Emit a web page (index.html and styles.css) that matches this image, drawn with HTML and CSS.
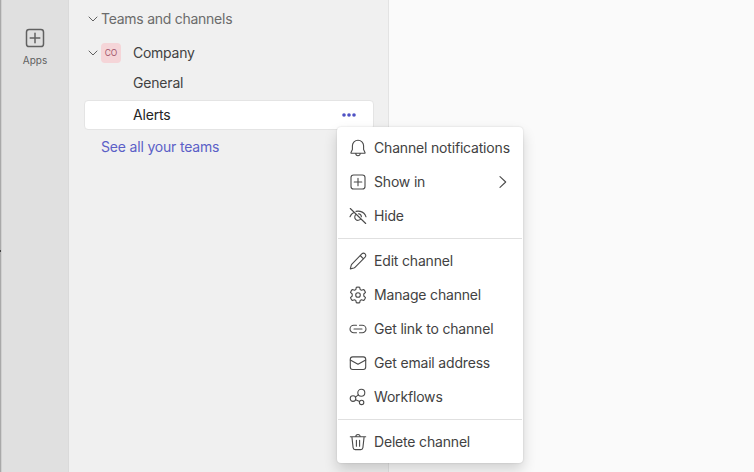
FILE: index.html
```html
<!DOCTYPE html>
<html lang="en">
<head>
<meta charset="utf-8">
<title>Teams and channels</title>
<link rel="stylesheet" href="styles.css">
</head>
<body>
<div class="app">
  <nav class="rail">
    <span class="edge-mark"></span>
    <button class="rail-item">
      <svg width="20" height="20" viewBox="0 0 20 20"><rect x="1.5" y="1.5" width="17" height="17" rx="2.6"/><path d="M10 5.200v9.600M5.200 10h9.600"/></svg>
      <span>Apps</span>
    </button>
  </nav>
  <aside class="sidebar">
    <div class="row heading">
      <svg class="caret" width="10" height="6" viewBox="0 0 10 6"><path d="M1 1l4 4 4-4"/></svg>
      <span>Teams and channels</span>
    </div>
    <div class="row team">
      <svg class="caret" width="10" height="6" viewBox="0 0 10 6"><path d="M1 1l4 4 4-4"/></svg>
      <span class="avatar">CO</span>
      <span>Company</span>
    </div>
    <div class="row channel">General</div>
    <div class="row channel selected">
      <span>Alerts</span>
      <svg class="more" width="14" height="4" viewBox="0 0 14 4"><circle cx="2" cy="2" r="1.8"/><circle cx="7" cy="2" r="1.8"/><circle cx="12" cy="2" r="1.8"/></svg>
      <div class="menu">
        <div class="item"><svg viewBox="0 0 18 18"><path d="M9 1.2a5.6 5.6 0 0 0-5.6 5.6v3.7L2 13.4q-.3.9.6.9h12.8q.9 0 .6-.9l-1.4-2.9V6.8A5.6 5.6 0 0 0 9 1.2zM6.8 14.5a2.2 2.2 0 0 0 4.4 0"/></svg><span>Channel notifications</span></div>
        <div class="item"><svg viewBox="0 0 18 18"><rect x="2" y="2" width="14" height="14" rx="2.6"/><path d="M9 5.2v7.6M5.2 9h7.6"/></svg><span>Show in</span><svg class="arrow" viewBox="0 0 8 12"><path d="M1 .7L6.7 6 1 11.300"/></svg></div>
        <div class="item"><svg viewBox="0 0 18 18"><path d="M1.300 1.500l15.400 15M1 9.800Q2.200 6.700 5.100 5.200M7 4.400Q9 3.900 11.200 4.400 15.700 5.500 17 9.800M7.200 7.300a3.300 3.300 0 1 0 4.500 4.700M9.500 6.700a3.300 3.300 0 0 1 2.900 3"/></svg><span>Hide</span></div>
        <div class="divider"></div>
        <div class="item"><svg viewBox="0 0 18 18"><path d="M12.800 1.900a2.300 2.300 0 0 1 3.300 3.300L6 15.300q-.5.500-1.200.7l-3.500.9.900-3.600q.2-.7.700-1.200zM11.200 3.500l3.300 3.300"/></svg><span>Edit channel</span></div>
        <div class="item"><svg viewBox="0 0 18 18"><path d="M7.300 1.300Q9 .9 10.700 1.300L11.200 3.600 12.400 4.200 14.700 3.500Q15.900 4.700 16.500 6.400L14.800 8V10L16.500 11.600Q15.900 13.300 14.700 14.500L12.400 13.800 11.200 14.400 10.700 16.700Q9 17.100 7.300 16.700L6.800 14.400 5.600 13.800 3.300 14.500Q2.100 13.300 1.500 11.600L3.200 10V8L1.500 6.400Q2.100 4.700 3.300 3.500L5.600 4.200 6.800 3.600z"/><circle cx="9" cy="9" r="2.300"/></svg><span>Manage channel</span></div>
        <div class="item"><svg viewBox="0 0 18 18"><path d="M7.500 5.200H4.800a3.800 3.800 0 0 0 0 7.600h2.700M10.500 5.200h2.700a3.800 3.800 0 0 1 0 7.600h-2.700M5 9h8"/></svg><span>Get link to channel</span></div>
        <div class="item"><svg viewBox="0 0 18 18"><rect x="1.300" y="2.900" width="15.400" height="12.600" rx="2.400"/><path d="M1.300 6L9 10.300 16.700 6"/></svg><span>Get email address</span></div>
        <div class="item"><svg viewBox="0 0 18 18"><circle cx="12.300" cy="4.800" r="3.500"/><circle cx="4" cy="10.600" r="2.800"/><circle cx="12.600" cy="14.400" r="2.200"/><path d="M6.400 9.100l3-2.200M6.600 11.700l4 1.800"/></svg><span>Workflows</span></div>
        <div class="divider"></div>
        <div class="item"><svg viewBox="0 0 18 18"><path d="M1.300 3.800h15.400M6.800 3.700a2.200 2.200 0 0 1 4.400 0M2.900 3.900l1.200 10.700q.2 2 2.100 2h5.600q1.900 0 2.100-2L15.100 3.900M7.400 7.200v6M10.600 7.200v6"/></svg><span>Delete channel</span></div>
      </div>
    </div>
    <a class="row link">See all your teams</a>
  </aside>
  <main class="content"></main>
</div>
</body>
</html>
```
FILE: styles.css
```css
* { box-sizing: border-box; }
body {
  margin: 0;
  font: 14px/20px Inter, "Liberation Sans", sans-serif;
  letter-spacing: -0.18px;
  color: #424242;
  background: #fafafa;
}
svg { fill: none; stroke: #4a4a4a; stroke-linecap: round; stroke-linejoin: round; flex: none; }
.app { display: flex; height: 472px; overflow: hidden; }
.rail {
  position: relative;
  width: 69px;
  background: #e0e0e0;
  border-left: 1px solid #a9a9a9;
  box-shadow: inset 1px 0 #d0d0d0, inset -1px 0 #dadada;
  padding-top: 28px;
}
.edge-mark { position: absolute; left: -1px; top: 250px; width: 1px; height: 2px; background: #444; }
.rail-item {
  display: flex;
  flex-direction: column;
  align-items: center;
  width: 100%;
  padding: 0;
  border: 0;
  background: none;
  font: 10px/14px Inter, sans-serif;
  color: #616161;
  gap: 5px;
}
.rail-item svg { stroke: #616161; stroke-width: 1.5; }
.sidebar {
  width: 320px;
  padding: 9px 14px 0 15px;
  background: #f0f0f0;
  border-right: 1px solid #e3e3e3;
}
.row { display: flex; align-items: center; }
.heading { height: 20px; padding-left: 4px; gap: 3px; color: #6b6b6b; letter-spacing: -0.26px; }
.caret { stroke: #616161; }
.team { height: 28px; margin-top: 10px; padding-left: 4px; gap: 3px; letter-spacing: -0.26px; }
.avatar {
  width: 20px;
  height: 20px;
  margin-right: 9px;
  border-radius: 4px;
  background: #f5d5d8;
  color: #a0566b;
  font-size: 8.500px;
  letter-spacing: 0;
  text-align: center;
}
.channel { height: 28px; margin-top: 2px; padding-left: 49px; }
.selected {
  position: relative;
  height: 30px;
  margin-top: 3px;
  border: 1px solid #e4e4e4;
  border-radius: 4px;
  background: #fff;
  color: #242424;
  padding: 0 17px 0 48px;
  justify-content: space-between;
}
.more { fill: #4f52c4; stroke: none; }
.link { height: 20px; margin-top: 7px; padding-left: 17px; color: #5b5fc7; }
.content { flex: 1; }
.menu {
  position: absolute;
  left: 252px;
  top: 26px;
  width: 186px;
  height: 336px;
  padding: 4px 1px;
  border-radius: 4px;
  background: #fff;
  box-shadow: 0 0 2px rgba(0,0,0,.16), 0 7px 14px rgba(0,0,0,.16);
  color: #424242;
}
.item { display: flex; align-items: center; height: 34px; padding: 0 15px 0 11px; gap: 7px; white-space: nowrap; }
.item svg { width: 18px; height: 18px; stroke-width: 1.1; }
.item .arrow { width: 8px; height: 12px; margin-left: auto; }
.divider { height: 1px; margin: 5px 0; background: #e0e0e0; }
```
